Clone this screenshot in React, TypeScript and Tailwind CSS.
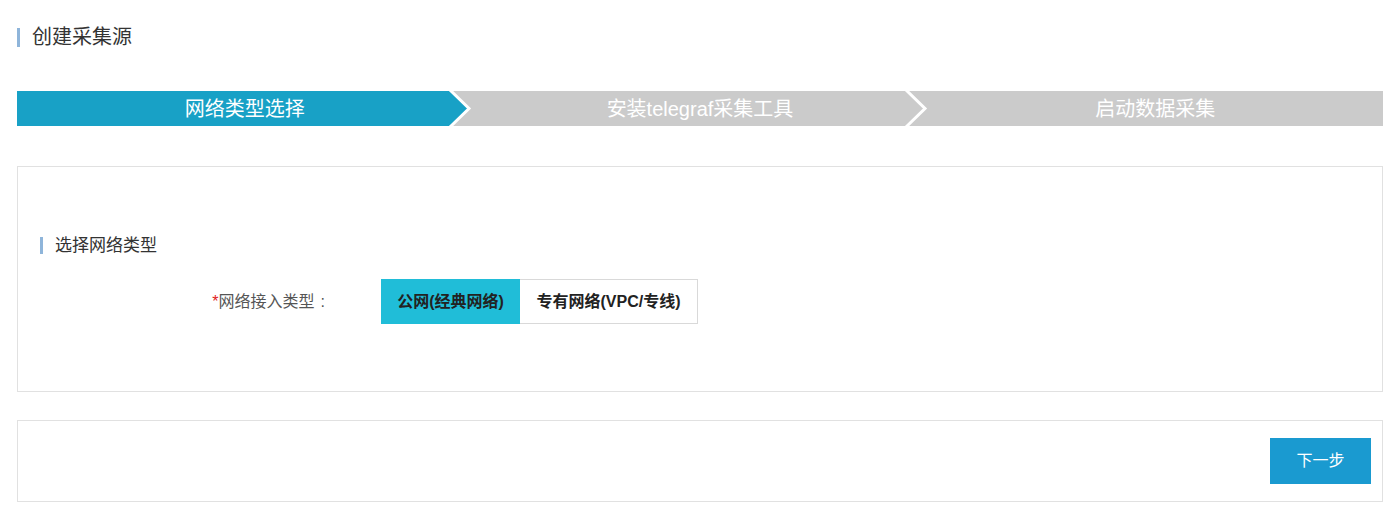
const FONT = "font-['Liberation_Sans','Noto_Sans_CJK_SC',sans-serif]";

const STEPS = ["网络类型选择", "安装telegraf采集工具", "启动数据采集"];

function Chevron() {
  return (
    <svg
      className="absolute right-0 top-0 h-full w-[24px]"
      viewBox="0 0 24 35"
      preserveAspectRatio="none"
    >
      <polyline points="2,-1 21,17.5 2,36" fill="none" stroke="#ffffff" strokeWidth="3" />
    </svg>
  );
}

function StepBar({ active }: { active: number }) {
  return (
    <div className="flex h-[35px] bg-[#cbcbcb]">
      {STEPS.map((label, i) => (
        <div key={label} className="relative flex-1">
          {i === active && (
            <div className="absolute inset-0 bg-[#18a1c6] [clip-path:polygon(0_0,calc(100%-23px)_0,calc(100%-4px)_50%,calc(100%-23px)_100%,0_100%)]" />
          )}
          <div className="relative flex h-full items-center justify-center text-[20px] text-white">
            {label}
          </div>
          {i < STEPS.length - 1 && <Chevron />}
        </div>
      ))}
    </div>
  );
}

export default function App() {
  return (
    <div className={`${FONT} h-[517px] w-full bg-white px-[17px] text-[#333]`}>
      {/* Title */}
      <div className="flex items-center pt-[27px]">
        <span className="h-[19px] w-[3px] bg-[#8fb5da]" />
        <h1 className="ml-[12px] text-[20px] leading-[20px] text-[#333]">创建采集源</h1>
      </div>

      {/* Steps */}
      <div className="mt-[44px]">
        <StepBar active={0} />
      </div>

      {/* Network type panel */}
      <div className="mt-[40px] h-[226px] border border-[#e1e1e1] bg-white">
        <div className="flex items-center pl-[22px] pt-[70px]">
          <span className="h-[17px] w-[3px] bg-[#8fb5da]" />
          <h2 className="ml-[12px] text-[17px] leading-[17px] text-[#333]">选择网络类型</h2>
        </div>
        <div className="mt-[25px] flex items-center">
          <label className="w-[307px] text-right text-[16px] text-[#555]">
            <span className="text-[#e02020]">*</span>网络接入类型<span className="ml-[6px]">:</span>
          </label>
          <div className="ml-[56px] flex h-[45px]">
            <button className="w-[139px] bg-[#20bdd8] text-[16px] font-bold text-[#222]">
              公网(经典网络)
            </button>
            <button className="w-[178px] border border-l-0 border-[#d9d9d9] bg-white text-[16px] font-bold text-[#222]">
              专有网络(VPC/专线)
            </button>
          </div>
        </div>
      </div>

      {/* Footer panel */}
      <div className="mt-[28px] flex h-[82px] items-center justify-end border border-[#e1e1e1] bg-white pr-[11px]">
        <button className="h-[46px] w-[101px] bg-[#1a9ad0] text-[16px] text-white">下一步</button>
      </div>
    </div>
  );
}
